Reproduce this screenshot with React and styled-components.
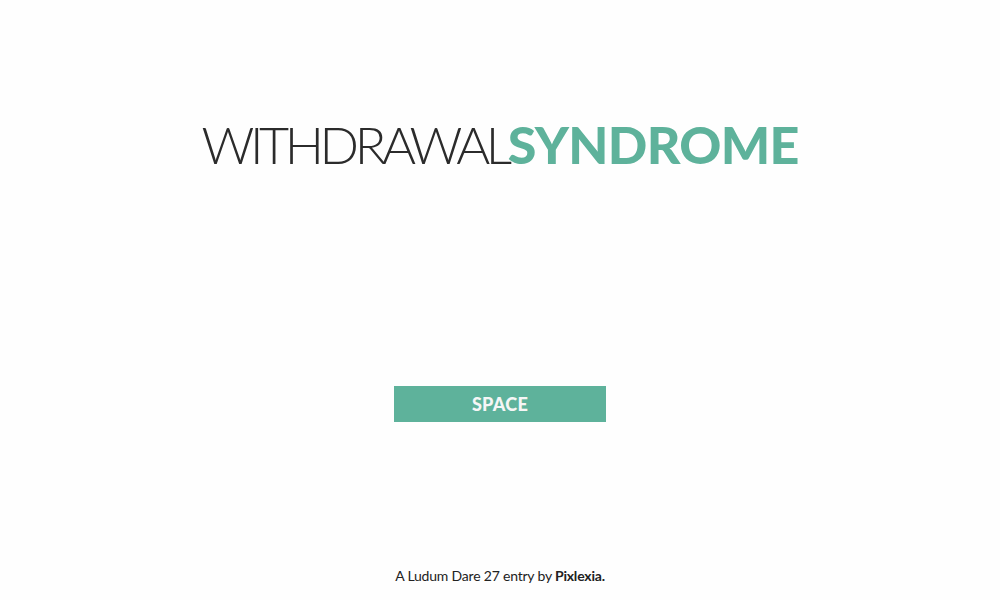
import React from 'react';
import styled, { createGlobalStyle } from 'styled-components';

const GlobalStyle = createGlobalStyle`
  html, body {
    margin: 0;
    padding: 0;
    background: #fefefe;
  }
`;

const Screen = styled.div`
  width: 1000px;
  height: 600px;
  display: flex;
  flex-direction: column;
  align-items: center;
  font-family: Lato, 'Liberation Sans', sans-serif;
  color: #2b2b2b;
`;

const Title = styled.h1`
  margin: 118px 0 0 0;
  font-size: 52px;
  line-height: 52px;
  font-weight: 300;
  white-space: nowrap;
`;

const Light = styled.span`
  font-weight: 300;
  color: #2b2b2b;
  letter-spacing: -4.4px;
`;

const Bold = styled.span`
  font-weight: 900;
  color: #5eb29b;
  letter-spacing: -0.7px;
`;

const StartButton = styled.button`
  margin-top: 216px;
  width: 212px;
  height: 36px;
  border: 0;
  background: #5eb29b;
  color: #f6f6f6;
  font-family: Lato, 'Liberation Sans', sans-serif;
  font-weight: 900;
  font-size: 18px;
  letter-spacing: 0.3px;
  cursor: pointer;
`;

const Footer = styled.p`
  margin: auto 0 16px 0;
  font-size: 14px;
  letter-spacing: -0.2px;
  color: #222;

  strong {
    font-weight: 700;
  }
`;

export default function App() {
  return (
    <>
      <GlobalStyle />
      <Screen>
        <Title>
          <Light>WITHDRAWAL</Light>
          <Bold>SYNDROME</Bold>
        </Title>
        <StartButton>SPACE</StartButton>
        <Footer>
          A Ludum Dare 27 entry by <strong>Pixlexia.</strong>
        </Footer>
      </Screen>
    </>
  );
}
